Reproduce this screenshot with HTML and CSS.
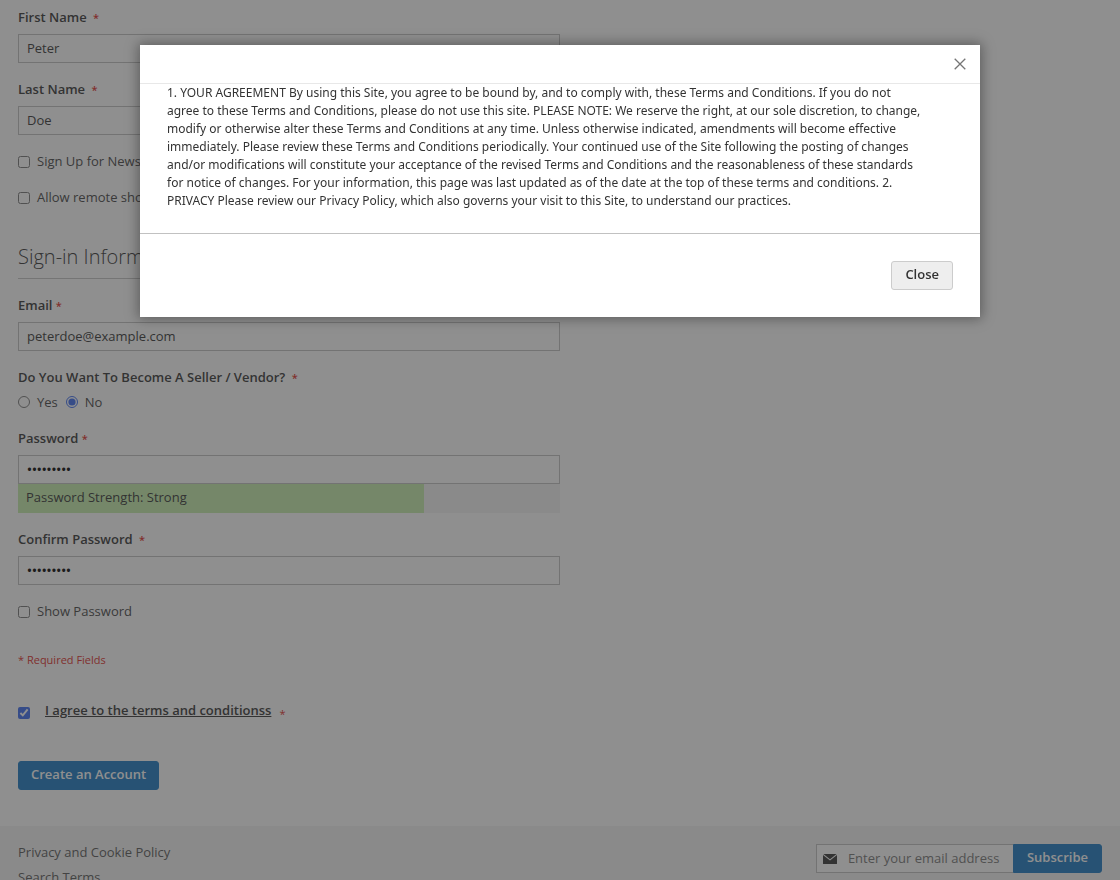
FILE: index.html
```html
<!DOCTYPE html>
<html lang="en">
<head>
<meta charset="utf-8">
<title>Create New Customer Account</title>
<link rel="stylesheet" href="styles.css">
</head>
<body>
<main class="page">
  <form class="form">
    <div class="field">
      <label class="label" for="first">First Name <span class="req req-wide">*</span></label>
      <input class="text" id="first" type="text" value="Peter">
    </div>
    <div class="field">
      <label class="label" for="last">Last Name <span class="req req-wide">*</span></label>
      <input class="text" id="last" type="text" value="Doe">
    </div>
    <div class="choice">
      <input class="tick" id="news" type="checkbox"><label for="news">Sign Up for Newsletter</label>
    </div>
    <div class="choice choice-last">
      <input class="tick" id="remote" type="checkbox"><label for="remote">Allow remote shopping</label>
    </div>
    <h2 class="legend">Sign-in Information</h2>
    <div class="field">
      <label class="label" for="email">Email <span class="req">*</span></label>
      <input class="text" id="email" type="email" value="peterdoe@example.com">
    </div>
    <div class="field" role="radiogroup" aria-labelledby="vendor">
      <span class="label" id="vendor">Do You Want To Become A Seller / Vendor? <span class="req req-wide">*</span></span>
      <div class="radios">
        <input class="tick" id="yes" type="radio" name="vendor"><label for="yes">Yes</label>
        <input class="tick" id="no" type="radio" name="vendor" checked><label for="no">No</label>
      </div>
    </div>
    <div class="field">
      <label class="label" for="pass">Password <span class="req">*</span></label>
      <input class="text secret" id="pass" type="password" value="Passw0rd!">
      <div class="meter"><div class="meter-text">Password Strength: Strong</div></div>
    </div>
    <div class="field">
      <label class="label" for="confirm">Confirm Password <span class="req req-wide">*</span></label>
      <input class="text secret" id="confirm" type="password" value="Passw0rd!">
    </div>
    <div class="choice">
      <input class="tick" id="show" type="checkbox"><label for="show">Show Password</label>
    </div>
    <p class="required">* Required Fields</p>
    <div class="agree">
      <input class="tick agree-tick" id="agree" type="checkbox" checked><label class="terms" for="agree">I agree to the terms and conditionss</label>
      <span class="req agree-req">*</span>
    </div>
    <button class="btn primary create" type="submit">Create an Account</button>
  </form>
</main>
<footer class="footer">
  <nav class="links">
    <a href="#privacy">Privacy and Cookie Policy</a>
    <a href="#search">Search Terms</a>
  </nav>
  <form class="subscribe">
    <label class="mailbox" for="newsletter">
      <svg class="mail" viewBox="0 0 14 10" aria-hidden="true"><path d="M.4 0h13.2L7 5.200zM0 1l7 5.600L14 1v8.400q0 .6-.6.6H.6Q0 10 0 9.400z"/></svg>
      <input class="mail-input" id="newsletter" type="email" placeholder="Enter your email address" aria-label="Email address">
    </label>
    <button class="btn primary join" type="submit">Subscribe</button>
  </form>
</footer>
<div class="overlay">
  <section class="modal" role="dialog" aria-modal="true" aria-label="Terms and conditions">
    <header class="modal-head">
      <button class="x" type="button" aria-label="Close dialog"><svg viewBox="0 0 12 12" aria-hidden="true"><path d="M.7.7l10.600 10.600M11.300.7.7 11.300"/></svg></button>
    </header>
    <div class="modal-body">1. YOUR AGREEMENT By using this Site, you agree to be bound by, and to comply with, these Terms and Conditions. If you do not agree to these Terms and Conditions, please do not use this site. PLEASE NOTE: We reserve the right, at our sole discretion, to change, modify or otherwise alter these Terms and Conditions at any time. Unless otherwise indicated, amendments will become effective immediately. Please review these Terms and Conditions periodically. Your continued use of the Site following the posting of changes and/or modifications will constitute your acceptance of the revised Terms and Conditions and the reasonableness of these standards for notice of changes. For your information, this page was last updated as of the date at the top of these terms and conditions. 2. PRIVACY Please review our Privacy Policy, which also governs your visit to this Site, to understand our practices.</div>
    <div class="modal-foot"><button class="btn secondary" type="button">Close</button></div>
  </section>
</div>
</body>
</html>
```
FILE: styles.css
```css
* { box-sizing: border-box; }
html { height: 100%; overflow: hidden; }
body {
  height: 100%;
  margin: 0;
  overflow: hidden;
  background: #fff;
  color: #333;
  font: 13px/18px "Open Sans", "Noto Sans", sans-serif;
}
input, button { font: inherit; color: inherit; }

.page { padding: 8px 18px 36px; }
.form { width: 50%; }
.field { margin-bottom: 17px; }
.label { display: block; margin-bottom: 8px; font-weight: 600; }
.req { color: #e02b27; font-size: 11px; line-height: 11px; }
.req-wide { margin-left: 3px; }
.text {
  display: block;
  width: 100%;
  height: 29px;
  padding: 0 8px 2px;
  border: 1px solid #c2c2c2;
  border-radius: 0;
  background: #fff;
}
.secret { color: #000; font-weight: 600; }
.tick { width: 12px; height: 12px; margin: 1px 0 0; accent-color: #3b6cf0; }
.choice { display: flex; align-items: center; gap: 7px; margin-bottom: 18px; }
.choice label, .radios label { color: #444; }
.choice-last { margin-bottom: 38px; }
.legend {
  margin: 0 0 17px;
  padding-bottom: 8px;
  border-bottom: 1px solid #c5c5c5;
  font-size: 20px;
  font-weight: 300;
  line-height: 26px;
}
.radios { display: flex; align-items: center; gap: 7px; margin-top: -1px; padding-bottom: 1px; }
.radios .tick { margin-top: 0; }
.radios label + .tick { margin-left: 1px; }
.meter {
  height: 29px;
  background: linear-gradient(to right, #c5eeac 75%, #f4f4f4 75%);
}
.meter-text { padding: 4px 8px; }
.required { margin: 31px 0 32px; color: #e02b27; font-size: 11px; }
.agree { display: flex; align-items: center; margin-bottom: 42px; }
.agree-tick { margin: 6px 15px 0 0; }
.terms { font-weight: 600; text-decoration: underline; }
.agree-req { margin: 6px 0 0 8px; }

.btn {
  height: 29px;
  padding: 0 13px 3px;
  border: 1px solid;
  border-radius: 3px;
  font-weight: 600;
  line-height: 16px;
  white-space: nowrap;
  cursor: pointer;
}
.primary { border-color: #1979c3; background: #1979c3; color: #fff; }
.create { padding-left: 12px; padding-right: 12px; }
.secondary { border-color: #ccc; background: #eee; color: #333; }

.footer {
  display: flex;
  justify-content: space-between;
  align-items: flex-start;
  padding: 18px;
  background: #f4f4f4;
}
.links { display: flex; flex-direction: column; gap: 7px; margin-top: -1px; }
.links a { color: #575757; text-decoration: none; }
.subscribe { display: flex; }
.mailbox {
  display: flex;
  align-items: center;
  width: 197px;
  height: 29px;
  padding-left: 6px;
  border: 1px solid #c2c2c2;
  border-right: 0;
  background: #fff;
}
.mail { flex: none; width: 14px; height: 10px; fill: #333; }
.mail-input {
  flex: 1;
  min-width: 0;
  padding: 0 0 2px 11px;
  border: 0;
  background: transparent;
}
.mail-input::placeholder { color: #757575; }
.join { border-radius: 0 3px 3px 0; }

.overlay {
  position: fixed;
  inset: 0;
  display: flex;
  justify-content: center;
  align-items: flex-start;
  padding-top: 45px;
  background: rgba(51, 51, 51, 0.55);
}
.modal {
  width: 75%;
  background: #fff;
  box-shadow: 0 0 12px 2px rgba(0, 0, 0, 0.35);
}
.modal-head {
  display: flex;
  justify-content: flex-end;
  padding: 8px 9px 9px;
  border-bottom: 1px solid #e8e8e8;
}
.x { width: 22px; height: 21px; padding: 5px; border: 0; background: none; cursor: pointer; }
.x svg { display: block; width: 12px; height: 12px; stroke: #757575; stroke-width: 1.3; fill: none; }
.modal-body {
  padding: 0 55px 23px 27px;
  font-family: "Noto Sans", "Open Sans", sans-serif;
  font-size: 12px;
}
.modal-foot {
  display: flex;
  justify-content: flex-end;
  padding: 27px;
  border-top: 1px solid #c1c1c1;
}
```
